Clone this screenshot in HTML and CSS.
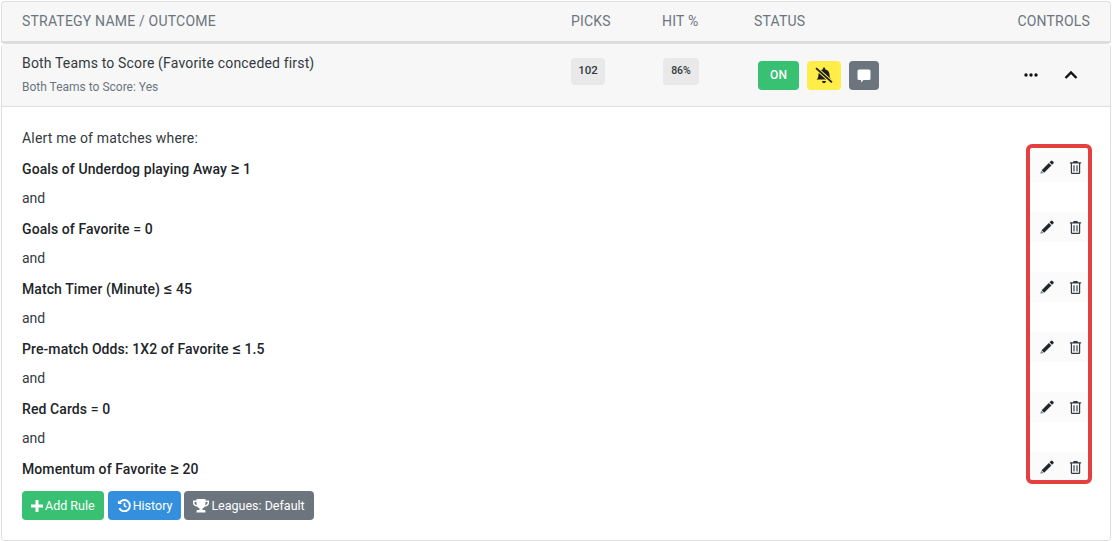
FILE: index.html
```html
<!DOCTYPE html>
<html lang="en">
<head>
<meta charset="utf-8">
<title>Strategy</title>
<link rel="stylesheet" href="styles.css">
</head>
<body>
<svg class="defs" width="0" height="0" aria-hidden="true">
  <defs>
    <symbol id="pencil" viewBox="0 0 16 16"><path d="M12.600 1a1.300 1.300 0 0 1 1.800 0l.9.9a1.300 1.300 0 0 1 0 1.800l-1.400 1.400-2.700-2.700z"/><path d="M10.500 3.100l2.700 2.700-7.700 7.700-2.700-2.700z"/><path d="M2.400 11.400l2.400 2.400-3.500.9z" fill="#7d8790"/></symbol>
    <symbol id="trash" viewBox="0 0 16 16"><path d="M6 1h4l.7 1.400H14v1.400h-1v9.700A1.500 1.500 0 0 1 11.500 15h-7A1.500 1.500 0 0 1 3 13.500V3.800H2V2.400h3.300zM4.300 3.800v9.500c0 .2.100.4.300.4h6.800c.2 0 .3-.2.300-.4V3.800zM5.800 5.500h1.200v6.800H5.800zM9 5.500h1.200v6.800H9z" fill-rule="evenodd"/></symbol>
  </defs>
</svg>
<main class="page">
  <header class="head card">
    <div class="col-name">STRATEGY NAME / OUTCOME</div>
    <div class="col-picks">PICKS</div>
    <div class="col-hit">HIT %</div>
    <div class="col-status">STATUS</div>
    <div class="col-controls head-controls">CONTROLS</div>
  </header>
  <section class="card strategy">
    <div class="summary">
      <div class="col-name">
        <div class="title">Both Teams to Score (Favorite conceded first)</div>
        <div class="sub">Both Teams to Score: Yes</div>
      </div>
      <div class="col-picks"><span class="pill">102</span></div>
      <div class="col-hit"><span class="pill">86%</span></div>
      <div class="col-status status-btns">
        <span class="sbtn on">ON</span>
        <span class="sbtn bell">
          <svg width="20" height="17" viewBox="0 0 18 16"><path d="M9 .5a1.100 1.100 0 0 1 1.100 1.100v.8c2.500.4 4.100 2.400 4.100 4.800 0 2.300.6 3.400 1.800 4.500H2c1.200-1.100 1.800-2.200 1.800-4.500 0-2.400 1.600-4.400 4.100-4.800v-.8A1.100 1.100 0 0 1 9 .5zM7.100 13.200h3.800A1.900 1.900 0 0 1 9 15.200a1.900 1.900 0 0 1-1.900-2z" fill="#1d1d1d"/><path d="M1.500 1l15 13.500" stroke="#ffed4a" stroke-width="3.400"/><path d="M1.500 1l15 13.500" stroke="#1d1d1d" stroke-width="1.700"/></svg>
        </span>
        <span class="sbtn note">
          <svg width="14" height="14" viewBox="0 0 14 14"><path d="M2 .5h10A1.500 1.500 0 0 1 13.500 2v7.500A1.500 1.500 0 0 1 12 11H6.500l-2.500 2.500V11H2A1.500 1.500 0 0 1 .5 9.500V2A1.500 1.500 0 0 1 2 .5z" fill="#fff"/></svg>
        </span>
      </div>
      <div class="col-controls ctrl">
        <svg width="14" height="14" viewBox="0 0 14 4"><circle cx="2" cy="2" r="1.700"/><circle cx="7" cy="2" r="1.700"/><circle cx="12" cy="2" r="1.700"/></svg>
        <svg width="14" height="10" viewBox="0 0 14 10"><path d="M1.500 8L7 2.500 12.500 8" fill="none" stroke="#111" stroke-width="2.400"/></svg>
      </div>
    </div>
    <div class="body">
      <p class="intro">Alert me of matches where:</p>
      <div class="rule"><strong>Goals of Underdog playing Away <span class="op">≥</span> 1</strong><span class="tools"><svg class="ic"><use href="#pencil"/></svg><svg class="ic tr"><use href="#trash"/></svg></span></div>
      <p class="and">and</p>
      <div class="rule"><strong>Goals of Favorite = 0</strong><span class="tools"><svg class="ic"><use href="#pencil"/></svg><svg class="ic tr"><use href="#trash"/></svg></span></div>
      <p class="and">and</p>
      <div class="rule"><strong>Match Timer (Minute) <span class="op">≤</span> 45</strong><span class="tools"><svg class="ic"><use href="#pencil"/></svg><svg class="ic tr"><use href="#trash"/></svg></span></div>
      <p class="and">and</p>
      <div class="rule"><strong>Pre-match Odds: 1X2 of Favorite <span class="op">≤</span> 1.5</strong><span class="tools"><svg class="ic"><use href="#pencil"/></svg><svg class="ic tr"><use href="#trash"/></svg></span></div>
      <p class="and">and</p>
      <div class="rule"><strong>Red Cards = 0</strong><span class="tools"><svg class="ic"><use href="#pencil"/></svg><svg class="ic tr"><use href="#trash"/></svg></span></div>
      <p class="and">and</p>
      <div class="rule"><strong>Momentum of Favorite <span class="op">≥</span> 20</strong><span class="tools"><svg class="ic"><use href="#pencil"/></svg><svg class="ic tr"><use href="#trash"/></svg></span></div>
      <div class="actions">
        <span class="abtn green"><svg width="12" height="12" viewBox="0 0 12 12"><path d="M4.500 0h3v4.500H12v3H7.500V12h-3V7.500H0v-3h4.500z" fill="#fff"/></svg>Add Rule</span>
        <span class="abtn blue"><svg width="14" height="13" viewBox="0 0 14 14"><path d="M1.900 4.500A6 6 0 1 1 2 10" fill="none" stroke="#fff" stroke-width="2.100"/><path d="M.5 1.500l4.500 4H.5z" fill="#fff"/><path d="M7.500 4v3.300l2.200 1.500" fill="none" stroke="#fff" stroke-width="1.700"/></svg>History</span>
        <span class="abtn grey"><svg width="16" height="14" viewBox="0 0 16 14"><path d="M3.500 0h9v1.500H16V4c0 2-1.700 3.500-4.300 3.800-.6.900-1.300 1.400-2.200 1.700V11h1.800c.8 0 1.200.6 1.200 1.300v1.200H3.500v-1.200c0-.7.400-1.300 1.200-1.300h1.800V9.500c-.9-.3-1.600-.8-2.200-1.700C1.700 7.500 0 6 0 4V1.500h3.500zM1.500 3v1c0 1 .8 1.900 2.300 2.200-.2-.9-.3-2-.3-3.200zm13 0h-2c0 1.200-.1 2.300-.3 3.200 1.500-.3 2.300-1.200 2.300-2.200z" fill="#fff" fill-rule="evenodd"/></svg>Leagues: Default</span>
      </div>
    </div>
    <div class="highlight"></div>
  </section>
</main>
</body>
</html>
```
FILE: styles.css
```css
* { box-sizing: border-box; }
html, body { margin: 0; height: 100%; background: #fff; }
body { font-family: Roboto, "Liberation Sans", sans-serif; font-size: 14px; color: #212529; overflow: hidden; }
.defs { position: absolute; }
.page { padding: 1px 1px 0; display: flex; flex-direction: column; }
.card { border: 1px solid #dfdfdf; border-radius: 4px; }
.head, .summary { display: grid; grid-template-columns: 549px 91px 92px 1fr 172px; padding-left: 20px; }
.head { height: 42px; align-items: center; background: #f7f7f7; border-bottom: 2px solid #dcdcdc; color: #6c757d; font-size: 14px; letter-spacing: .2px; padding-bottom: 1px; border-radius: 4px 4px 0 0; }
.head-controls { text-align: right; padding-right: 20px; }
.strategy { position: relative; height: 498px; margin-top: 0; }
.summary { height: 63px; background: #f7f7f7; border-bottom: 1px solid #dfdfdf; }
.title { font-size: 14px; line-height: 20px; margin-top: 9px; letter-spacing: .16px; color: #343a40; }
.sub { font-size: 12px; line-height: 16px; margin-top: 6px; color: #6c757d; }
.pill { display: inline-block; width: 34px; height: 27px; margin-top: 14px; background: #e9e9e9; border-radius: 4px; font-size: 11.5px; font-weight: 500; line-height: 25px; text-align: center; color: #343a40; }
.col-hit .pill { width: 36px; margin-left: 1px; font-size: 10.5px; line-height: 25px; }
.status-btns { display: flex; gap: 8px; padding: 17px 0 0 4px; align-items: flex-start; }
.sbtn { display: flex; align-items: center; justify-content: center; height: 29px; border-radius: 4px; }
.on { width: 41px; background: #38c172; color: #fff; font-size: 12px; font-weight: 500; padding-bottom: 1px; }
.bell { width: 34px; background: #ffed4a; }
.note { width: 30px; background: #6c757d; }
.ctrl { display: flex; align-items: center; justify-content: flex-end; gap: 26px; padding: 0 32px 0 0; }
.ctrl svg { fill: #111; }
.body { padding: 21px 20px 0; display: flex; flex-direction: column; }
.intro { margin: 0; height: 25px; line-height: 20px; color: #343a40; letter-spacing: .18px; }
.rule { display: flex; justify-content: space-between; align-items: center; height: 30px; }
.rule strong { font-weight: 500; color: #212529; margin-top: 2px; line-height: 20px; letter-spacing: .09px; }
.op { font-size: 17px; line-height: 14px; }
.and { margin: 0; height: 30px; line-height: 30px; color: #343a40; }
.tools { display: flex; align-items: center; gap: 14px; height: 30px; width: 58px; padding-left: 9px; margin-right: 2px; background: #fbfbfc; margin-top: -2px; }
.ic { width: 15px; height: 15px; fill: #23272b; }
.tr { fill: #343a40; }
.actions { display: flex; gap: 4px; margin-top: 8px; }
.abtn { display: inline-flex; align-items: center; gap: 2px; height: 29px; padding: 0 9px; border-radius: 4px; color: #fff; font-size: 12.5px; font-weight: 400; white-space: nowrap; }
.green { background: #38c172; }
.blue { background: #3490dc; }
.grey { background: #6c757d; margin-left: -1px; }
.highlight { position: absolute; left: 1024px; top: 100px; width: 66px; height: 340px; border: 4px solid #e3403f; border-radius: 6px; pointer-events: none; }
```
